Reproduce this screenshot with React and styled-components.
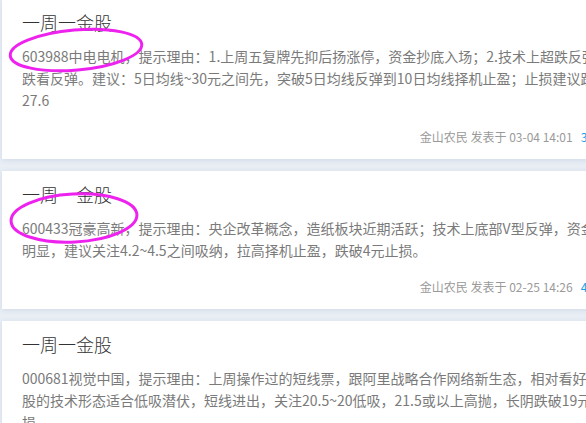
import React from "react";
import styled, { createGlobalStyle } from "styled-components";

const GlobalStyle = createGlobalStyle`
  html, body {
    margin: 0;
    padding: 0;
    background: #e9eef5;
    overflow: hidden;
  }
  body {
    font-family: "Noto Sans CJK SC", "Noto Sans", sans-serif;
  }
`;

const Page = styled.div`
  position: relative;
  width: 586px;
  height: 423px;
  overflow: hidden;
`;

const List = styled.div`
  display: flex;
  flex-direction: column;
  gap: 12px;
  margin-top: -1px;
  padding-left: 2px;
`;

const Card = styled.div`
  width: 632px;
  box-sizing: border-box;
  background: #fff;
  padding: 11px 20px 13px;
  box-shadow: 0 1px 5px rgba(120, 145, 180, 0.22);
`;

const Title = styled.h3`
  margin: 0;
  font-size: 18px;
  line-height: 24px;
  font-weight: 300;
  color: #333;
`;

const Body = styled.p`
  margin: 11px 0 0;
  font-size: 14px;
  line-height: 22px;
  color: #7a7a7a;
  white-space: pre;
`;

const Footer = styled.div`
  display: flex;
  justify-content: flex-end;
  gap: 8px;
  margin-top: 17px;
  font-size: 12px;
  line-height: 18px;
  color: #9a9a9a;
`;

const Count = styled.span`
  color: #1a9fe6;
`;

const Marks = styled.svg`
  position: absolute;
  top: 0;
  left: 0;
  pointer-events: none;
`;

const posts = [
  {
    lines: [
      "603988中电电机，提示理由：1.上周五复牌先抑后扬涨停，资金抄底入场；2.技术上超跌反弹，短线超",
      "跌看反弹。建议：5日均线~30元之间先，突破5日均线反弹到10日均线择机止盈；止损建议跌破",
      "27.6",
    ],
    date: "03-04 14:01",
    count: 3,
  },
  {
    lines: [
      "600433冠豪高新，提示理由：央企改革概念，造纸板块近期活跃；技术上底部V型反弹，资金介入",
      "明显，建议关注4.2~4.5之间吸纳，拉高择机止盈，跌破4元止损。",
    ],
    date: "02-25 14:26",
    count: 4,
  },
  {
    lines: [
      "000681视觉中国，提示理由：上周操作过的短线票，跟阿里战略合作网络新生态，相对看好该",
      "股的技术形态适合低吸潜伏，短线进出，关注20.5~20低吸，21.5或以上高抛，长阴跌破19元止",
      "损。",
    ],
    date: "02-18 14:10",
    count: 2,
  },
];

const App = () => {
  return (
    <Page>
      <GlobalStyle />
      <List>
        {posts.map((post, i) => (
          <Card key={i}>
            <Title>一周一金股</Title>
            <Body>{post.lines.join("\n")}</Body>
            <Footer>
              <span>金山农民 发表于 {post.date}</span>
              <Count>{post.count} 评论</Count>
            </Footer>
          </Card>
        ))}
      </List>
      <Marks width="586" height="423" viewBox="0 0 586 423">
        <ellipse cx="76" cy="50" rx="66" ry="20" transform="rotate(-5 76 50)" fill="none" stroke="#ee22ee" strokeWidth="3" />
        <ellipse cx="74" cy="218" rx="63" ry="24" transform="rotate(-3 74 218)" fill="none" stroke="#ee22ee" strokeWidth="3" />
      </Marks>
    </Page>
  );
};

export default App;
